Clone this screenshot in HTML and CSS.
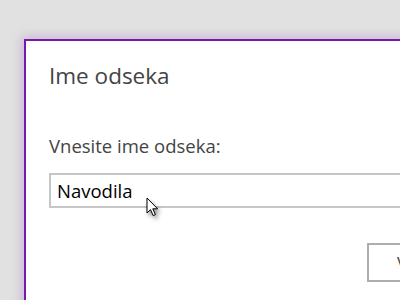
FILE: index.html
```html
<!DOCTYPE html>
<html lang="sl">
  <head>
    <meta charset="UTF-8" />
    <title>Ime odseka</title>
    <link rel="stylesheet" href="styles.css">
  </head>
  <body>
    <div class="dialog">
      <h1 class="dialog-title">Ime odseka</h1>
      <label class="field-label" for="sectionName">Vnesite ime odseka:</label>
      <div class="field">
        <input id="sectionName" class="field-input" type="text" value="Navodila" />
        <!-- mouse pointer over the field -->
        <svg class="pointer" width="14" height="22" viewBox="0 0 14 22">
          <path d="M1 1 L1 16 L4.5 12.6 L7.2 18.6 L9.4 17.6 L6.8 11.8 L11.6 11.8 Z"
                fill="#fff" stroke="#000" stroke-width="1" stroke-linejoin="miter" />
        </svg>
      </div>
      <div class="actions">
        <button class="btn">V redu</button>
      </div>
    </div>
  </body>
</html>
```

FILE: styles.css
```css
html, body {
  margin: 0;
  height: 100%;
  overflow: hidden;
}
body {
  background-color: #e1e1e1;
  font-family: "Open Sans", "Noto Sans", sans-serif;
}
.dialog {
  box-sizing: border-box;
  margin: 39px 0 0 24px;
  width: 448px;
  height: 320px;
  padding: 20px 23px 0 23px;
  background-color: #fff;
  border: 2px solid #7719aa;
  box-shadow: 0 0 10px 2px rgba(119, 25, 170, 0.22);
}
.dialog-title {
  margin: 0;
  font-size: 22.5px;
  font-weight: normal;
  color: #444;
  line-height: 30px;
}
.field-label {
  display: block;
  margin-top: 43px;
  font-size: 18.5px;
  color: #444;
  line-height: 24px;
}
.field {
  position: relative;
  margin-top: 15px;
}
.field-input {
  box-sizing: border-box;
  width: 100%;
  height: 35px;
  padding: 0 6px;
  border: 2px solid #c6c6c6;
  font-family: "Open Sans", "Noto Sans", sans-serif;
  font-size: 18.5px;
  color: #000;
  outline: none;
}
.pointer {
  position: absolute;
  left: 97px;
  top: 24px;
  filter: drop-shadow(2px 3px 2px rgba(0, 0, 0, 0.45));
}
.actions {
  display: flex;
  justify-content: flex-end;
  margin-top: 35px;
}
.btn {
  box-sizing: border-box;
  width: 80px;
  height: 39px;
  padding: 0 0 0 28px;
  text-align: left;
  white-space: nowrap;
  background-color: #fff;
  border: 2px solid #adadad;
  font-family: "Open Sans", "Noto Sans", sans-serif;
  font-size: 17px;
  color: #444;
}
```
